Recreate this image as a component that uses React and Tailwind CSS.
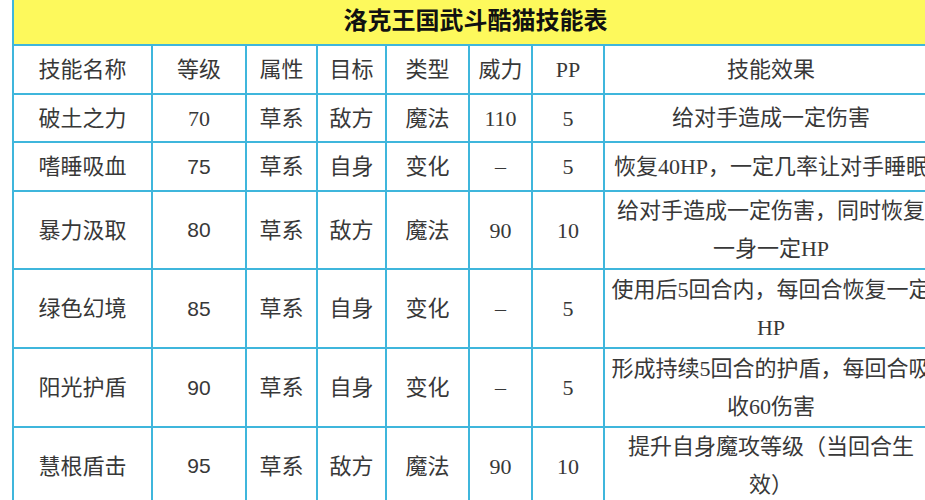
import React from "react";

const rows = [
	{ name: "破土之力", lv: "70", lvSerif: true, attr: "草系", target: "敌方", type: "魔法", power: "110", pp: "5", effect: ["给对手造成一定伤害"], h: "h-[48px]" },
	{ name: "嗜睡吸血", lv: "75", attr: "草系", target: "自身", type: "变化", power: "–", pp: "5", effect: ["恢复40HP，一定几率让对手睡眠"], h: "h-[49px]" },
	{ name: "暴力汲取", lv: "80", attr: "草系", target: "敌方", type: "魔法", power: "90", pp: "10", effect: ["给对手造成一定伤害，同时恢复", "一身一定HP"], h: "h-[75px]" },
	{ name: "绿色幻境", lv: "85", attr: "草系", target: "自身", type: "变化", power: "–", pp: "5", effect: ["使用后5回合内，每回合恢复一定", "HP"], h: "h-[79px]" },
	{ name: "阳光护盾", lv: "90", attr: "草系", target: "自身", type: "变化", power: "–", pp: "5", effect: ["形成持续5回合的护盾，每回合吸", "收60伤害"], h: "h-[79px]" },
	{ name: "慧根盾击", lv: "95", attr: "草系", target: "敌方", type: "魔法", power: "90", pp: "10", effect: ["提升自身魔攻等级（当回合生", "效）"], h: "h-[75px]" },
];

const cell = "border-2 border-[#3fb6dc] text-center align-middle p-0";

export default function App() {
	return (
		<div className="w-[925px] h-[500px] overflow-hidden bg-white pl-[12px]">
			<table className="table-fixed border-collapse w-[927px] text-[22px] text-[#383838] font-['Liberation_Serif','Noto_Sans_CJK_SC',serif]">
				<colgroup>
					<col className="w-[139px]" />
					<col className="w-[94px]" />
					<col className="w-[71px]" />
					<col className="w-[69px]" />
					<col className="w-[83px]" />
					<col className="w-[63px]" />
					<col className="w-[72px]" />
					<col className="w-[334px]" />
				</colgroup>
				<tbody>
					<tr className="h-[45px]">
						<td
							colSpan={8}
							className="border-2 border-t-0 border-[#3fb6dc] bg-[#fdf95c] text-center align-middle text-[24px] font-bold text-[#111] pb-[3px]"
						>
							洛克王国武斗酷猫技能表
						</td>
					</tr>
					<tr className="h-[49px]">
						<td className={cell}>技能名称</td>
						<td className={cell}>等级</td>
						<td className={cell}>属性</td>
						<td className={cell}>目标</td>
						<td className={cell}>类型</td>
						<td className={cell}>威力</td>
						<td className={cell}>PP</td>
						<td className={cell}>技能效果</td>
					</tr>
					{rows.map((r) => (
						<tr key={r.name} className={r.h}>
							<td className={cell}>{r.name}</td>
							<td className={`${cell} ${r.lvSerif ? "" : "font-['Liberation_Sans',sans-serif] text-[21px]"}`}>
								{r.lv}
							</td>
							<td className={cell}>{r.attr}</td>
							<td className={cell}>{r.target}</td>
							<td className={cell}>{r.type}</td>
							<td className={cell}>{r.power}</td>
							<td className={cell}>{r.pp}</td>
							<td className="border-2 border-[#3fb6dc] text-center align-middle px-[5px] py-0 leading-[38px] whitespace-nowrap">
								{r.effect.map((line, i) => (
									<div key={i}>{line}</div>
								))}
							</td>
						</tr>
					))}
				</tbody>
			</table>
		</div>
	);
}
